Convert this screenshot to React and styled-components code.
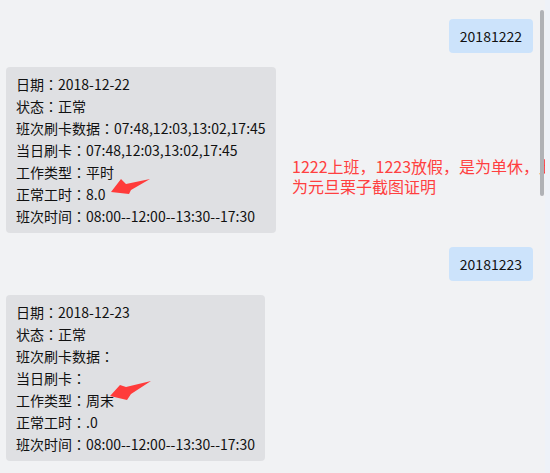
import React from "react";
import styled, { createGlobalStyle } from "styled-components";

const Global = createGlobalStyle`
  html, body { margin: 0; padding: 0; background: #f1f2f4; }
  body { overflow: hidden; }
`;

const Screen = styled.div`
  position: relative;
  width: 550px;
  height: 473px;
  overflow: hidden;
  background: #f1f2f4;
  font-family: "Microsoft YaHei", "Noto Sans CJK SC", sans-serif;
  color: #111;
`;

const MessageList = styled.div`
  display: flex;
  flex-direction: column;
  gap: 14px;
  padding: 0 17px 0 6px;
`;

const TimeLabel = styled.div`
  align-self: center;
  margin-top: -15px;
  margin-bottom: 4px;
  font-size: 12px;
  line-height: 16px;
  color: #999;
`;

const Row = styled.div`
  display: flex;
  justify-content: ${(p) => (p.$mine ? "flex-end" : "flex-start")};
`;

const Bubble = styled.div`
  height: 34px;
  padding: 0 11px;
  border-radius: 4px;
  background: #cce3fb;
  font-size: 14px;
  line-height: 34px;
  color: #111;
`;

const Card = styled.div`
  position: relative;
  padding: 6px 10px;
  border-radius: 4px;
  background: #dfe0e3;
  font-size: 14px;
  line-height: 22px;
  white-space: nowrap;
  color: #111;
`;

const Line = styled.div`
  height: 22px;
`;

const Colon = styled.span`
  font-family: "Noto Sans CJK TC", "Noto Sans CJK SC", sans-serif;
`;

const Arrow = styled.svg`
  position: absolute;
  left: ${(p) => p.$x}px;
  top: ${(p) => p.$y}px;
  overflow: visible;
`;

const Note = styled.div`
  position: absolute;
  left: 292px;
  top: 156px;
  font-family: "Noto Sans CJK SC", sans-serif;
  font-size: 16px;
  line-height: 20px;
  color: #ff4040;
  white-space: nowrap;
`;

const Track = styled.div`
  position: absolute;
  top: 0;
  right: 0;
  width: 5px;
  height: 100%;
  background: #eef2f8;
`;

const Thumb = styled.div`
  position: absolute;
  left: 540px;
  top: 10px;
  width: 4px;
  height: 186px;
  border-radius: 2px;
  background: #b0b2b6;
`;

const records = [
  {
    query: "20181222",
    lines: [
      ["日期", "2018-12-22"],
      ["状态", "正常"],
      ["班次刷卡数据", "07:48,12:03,13:02,17:45"],
      ["当日刷卡", "07:48,12:03,13:02,17:45"],
      ["工作类型", "平时"],
      ["正常工时", "8.0"],
      ["班次时间", "08:00--12:00--13:30--17:30"],
    ],
    arrow: { x: 104, y: 111, points: "1,14 11,1 16,6 40,1 21,12 19,16" },
  },
  {
    query: "20181223",
    lines: [
      ["日期", "2018-12-23"],
      ["状态", "正常"],
      ["班次刷卡数据", ""],
      ["当日刷卡", ""],
      ["工作类型", "周末"],
      ["正常工时", ".0"],
      ["班次时间", "08:00--12:00--13:30--17:30"],
    ],
    arrow: { x: 102, y: 84, points: "2,17 12,6 18,8 43,2 23,15 19,21" },
  },
];

export default function App() {
  return (
    <Screen>
      <Global />
      <MessageList>
        <TimeLabel>2018</TimeLabel>
        {records.map((r) => (
          <React.Fragment key={r.query}>
            <Row $mine>
              <Bubble>{r.query}</Bubble>
            </Row>
            <Row>
              <Card>
                {r.lines.map(([k, v]) => (
                  <Line key={k}>
                    {k}
                    <Colon>：</Colon>
                    {v}
                  </Line>
                ))}
                <Arrow $x={r.arrow.x} $y={r.arrow.y} width="46" height="22" viewBox="0 0 46 22">
                  <polygon points={r.arrow.points} fill="#ff3b3b" />
                </Arrow>
              </Card>
            </Row>
          </React.Fragment>
        ))}
      </MessageList>
      <Note>
        1222上班，1223放假，是为单休，此
        <br />
        为元旦栗子截图证明
      </Note>
      <Track />
      <Thumb />
    </Screen>
  );
}
